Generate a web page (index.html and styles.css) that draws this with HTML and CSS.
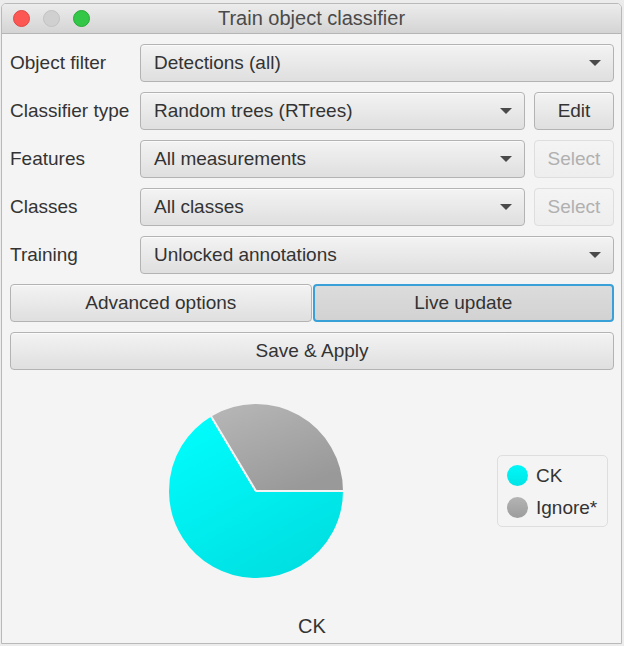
FILE: index.html
```html
<!DOCTYPE html>
<html>
<head>
<meta charset="utf-8">
<link rel="stylesheet" href="styles.css">
</head>
<body>
<div class="window">
  <div class="titlebar">
    <div class="lights">
      <span class="light red"></span>
      <span class="light grey"></span>
      <span class="light green"></span>
    </div>
    <div class="title">Train object classifier</div>
  </div>
  <div class="content">
    <div class="form">
      <div class="label">Object filter</div>
      <div class="combo span2"><span>Detections (all)</span><i class="arrow"></i></div>

      <div class="label">Classifier type</div>
      <div class="combo"><span>Random trees (RTrees)</span><i class="arrow"></i></div>
      <div class="btn">Edit</div>

      <div class="label">Features</div>
      <div class="combo"><span>All measurements</span><i class="arrow"></i></div>
      <div class="btn disabled">Select</div>

      <div class="label">Classes</div>
      <div class="combo"><span>All classes</span><i class="arrow"></i></div>
      <div class="btn disabled">Select</div>

      <div class="label">Training</div>
      <div class="combo span2"><span>Unlocked annotations</span><i class="arrow"></i></div>
    </div>
    <div class="pair">
      <div class="btn">Advanced options</div>
      <div class="btn selected">Live update</div>
    </div>
    <div class="btn wide">Save &amp; Apply</div>

    <div class="chart">
      <div class="chart-row">
        <svg class="pie" width="180" height="180" viewBox="0 0 180 180">
          <defs>
            <linearGradient id="gc" x1="0" y1="0" x2="0.6" y2="1">
              <stop offset="0" stop-color="#00ffff"/>
              <stop offset="1" stop-color="#00e0e2"/>
            </linearGradient>
            <linearGradient id="gg" x1="0" y1="0" x2="0.6" y2="1">
              <stop offset="0" stop-color="#b8b8b8"/>
              <stop offset="1" stop-color="#999999"/>
            </linearGradient>
          </defs>
          <path d="M90 90 L178 90 A88 88 0 1 1 44.7 14.6 Z" fill="url(#gc)" stroke="#f4f4f4" stroke-width="2" stroke-linejoin="round"/>
          <path d="M90 90 L44.7 14.6 A88 88 0 0 1 178 90 Z" fill="url(#gg)" stroke="#f4f4f4" stroke-width="2" stroke-linejoin="round"/>
        </svg>
        <div class="legend">
          <div class="item"><span class="dot cyan"></span>CK</div>
          <div class="item"><span class="dot gray"></span>Ignore*</div>
        </div>
      </div>
      <div class="chart-title">CK</div>
    </div>
  </div>
</div>
</body>
</html>
```

FILE: styles.css
```css
html, body {
  margin: 0;
  padding: 0;
}
body {
  background: #ececec;
  width: 624px;
  height: 646px;
  overflow: hidden;
  font-family: "Liberation Sans", Arial, sans-serif;
  color: #333333;
}
.window {
  margin: 3px 2px 0 1px;
  height: 641px;
  box-sizing: border-box;
  border: 1px solid #b9b9b9;
  border-radius: 5px 5px 0 0;
  background: #f4f4f4;
  display: flex;
  flex-direction: column;
  overflow: hidden;
}
.titlebar {
  height: 29px;
  flex: none;
  position: relative;
  background: linear-gradient(#ececec, #d4d4d4);
  border-bottom: 1px solid #b5b5b5;
  display: flex;
  align-items: center;
  justify-content: center;
}
.lights {
  position: absolute;
  left: 11px;
  top: 6px;
  display: flex;
  gap: 13px;
}
.light {
  width: 17px;
  height: 17px;
  border-radius: 50%;
  box-sizing: border-box;
}
.light.red { background: #fc5753; border: 1px solid #df4744; }
.light.grey { background: #d0d0d0; border: 1px solid #c2c2c2; }
.light.green { background: #33c748; border: 1px solid #27aa35; }
.title {
  font-size: 20px;
  color: #4a4a4a;
}
.content {
  flex: 1;
  padding: 10px 7px 0 8px;
  display: flex;
  flex-direction: column;
}
.form {
  display: grid;
  grid-template-columns: 121px 1fr 80px;
  column-gap: 9px;
  row-gap: 10px;
  align-items: center;
}
.label {
  font-size: 19px;
  color: #333;
  white-space: nowrap;
}
.combo, .btn {
  height: 38px;
  box-sizing: border-box;
  border: 1px solid #b3b3b3;
  border-radius: 4px;
  background: linear-gradient(#f3f3f3, #dfdfdf);
  box-shadow: inset 0 1px 0 #fbfbfb;
  font-size: 19px;
  color: #333;
  display: flex;
  align-items: center;
}
.combo {
  padding: 0 12px 0 13px;
  justify-content: space-between;
}
.combo.span2 {
  grid-column: 2 / 4;
}
.arrow {
  width: 0;
  height: 0;
  border-left: 6.5px solid transparent;
  border-right: 6.5px solid transparent;
  border-top: 6px solid #4a4a4a;
}
.btn {
  justify-content: center;
}
.btn.disabled {
  color: #b0b0b0;
  border-color: #dedede;
  background: linear-gradient(#f4f4f4, #eeeeee);
  box-shadow: none;
}
.pair {
  margin-top: 10px;
  display: grid;
  grid-template-columns: 1fr 1fr;
  gap: 1px;
}
.btn.selected {
  background: linear-gradient(#dcdcdc, #d2d2d2);
  border: 2px solid #3aa0d8;
  box-shadow: none;
}
.wide {
  margin-top: 10px;
}
.chart {
  display: flex;
  flex-direction: column;
}
.chart-row {
  display: flex;
  align-items: center;
  margin-top: 31px;
}
.pie {
  margin-left: 156px;
  display: block;
}
.legend {
  margin-left: auto;
  margin-right: 6px;
  width: 111px;
  height: 72px;
  box-sizing: border-box;
  border: 1px solid #dedede;
  border-radius: 5px;
  background: #f4f4f4;
  padding: 9px 0 0 9px;
  display: flex;
  flex-direction: column;
  gap: 11px;
}
.item {
  display: flex;
  align-items: center;
  gap: 8px;
  font-size: 19px;
  line-height: 21px;
  color: #333;
}
.dot {
  width: 21px;
  height: 21px;
  border-radius: 50%;
}
.dot.cyan { background: linear-gradient(#00f8f8, #00e4e6); }
.dot.gray { background: linear-gradient(#b4b4b4, #9c9c9c); }
.chart-title {
  margin-top: 34px;
  text-align: center;
  font-size: 20px;
  color: #333;
}
```
